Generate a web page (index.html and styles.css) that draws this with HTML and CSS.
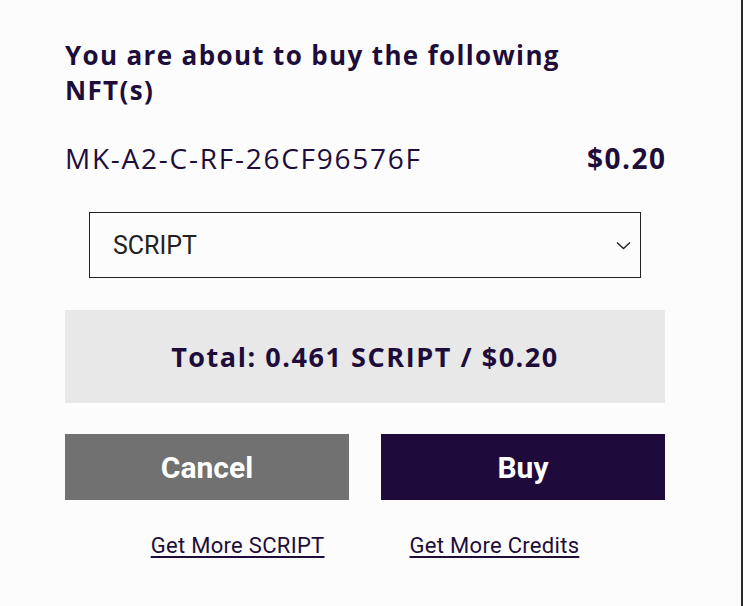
FILE: index.html
```html
<!DOCTYPE html>
<html lang="en">
<head>
<meta charset="utf-8">
<title>Buy NFT</title>
<link rel="stylesheet" href="styles.css">
</head>
<body>
<div class="modal">
  <h1 class="title">You are about to buy the following NFT(s)</h1>
  <div class="item-row">
    <span class="item-name">MK-A2-C-RF-26CF96576F</span>
    <span class="item-price">$0.20</span>
  </div>
  <div class="select-box">
    <span class="select-value">SCRIPT</span>
    <svg class="chevron" width="15" height="9" viewBox="0 0 15 9"><path d="M1 1.5 L7.5 7.5 L14 1.5" fill="none" stroke="#222" stroke-width="1.4"/></svg>
  </div>
  <div class="total">Total: 0.461 SCRIPT / $0.20</div>
  <div class="actions">
    <button class="btn btn-cancel">Cancel</button>
    <button class="btn btn-buy">Buy</button>
  </div>
  <div class="links">
    <a class="link" href="#">Get More SCRIPT</a>
    <a class="link" href="#">Get More Credits</a>
  </div>
</div>
</body>
</html>
```
FILE: styles.css
```css
html, body {
  margin: 0;
  padding: 0;
  background: #fcfcfc;
}
.modal {
  box-sizing: border-box;
  width: 743px;
  height: 606px;
  border-right: 2px solid #2a2a2a;
  padding: 38px 76px 0 65px;
  color: #1e0d3a;
  font-family: "Open Sans", "Liberation Sans", sans-serif;
}
.title {
  margin: 0;
  font-size: 26px;
  line-height: 35px;
  font-weight: 700;
  letter-spacing: 1.35px;
  width: 520px;
}
.item-row {
  display: flex;
  justify-content: space-between;
  align-items: baseline;
  margin-top: 32px;
  line-height: 36px;
}
.item-name {
  font-size: 28px;
  font-weight: 400;
  letter-spacing: 1.75px;
}
.item-price {
  font-size: 28px;
  font-weight: 700;
  letter-spacing: 1.5px;
  margin-right: -1.5px;
}
.select-box {
  margin: 36px 24px 0 24px;
  height: 66px;
  box-sizing: border-box;
  border: 1px solid #222;
  display: flex;
  align-items: center;
  justify-content: space-between;
  padding: 0 9px 0 23px;
  font-family: Roboto, "Liberation Sans", sans-serif;
  font-size: 25px;
  color: #222;
}
.chevron {
  display: block;
}
.total {
  margin-top: 32px;
  height: 93px;
  background: #e8e8e8;
  display: flex;
  align-items: center;
  justify-content: center;
  font-size: 27px;
  font-weight: 700;
  letter-spacing: 1.55px;
}
.actions {
  margin-top: 31px;
  display: flex;
  gap: 32px;
}
.btn {
  flex: 1;
  height: 66px;
  border: none;
  color: #fff;
  font-family: Roboto, "Liberation Sans", sans-serif;
  font-size: 30px;
  font-weight: 700;
  cursor: pointer;
}
.btn-cancel {
  background: #717171;
}
.btn-buy {
  background: #1f0a3c;
}
.links {
  margin-top: 33px;
  display: flex;
  justify-content: center;
  gap: 85px;
}
.link {
  color: #1e0d3a;
  font-family: Roboto, "Liberation Sans", sans-serif;
  font-size: 22px;
  letter-spacing: 0.3px;
  text-decoration: underline;
  text-underline-offset: 3px;
}
```
